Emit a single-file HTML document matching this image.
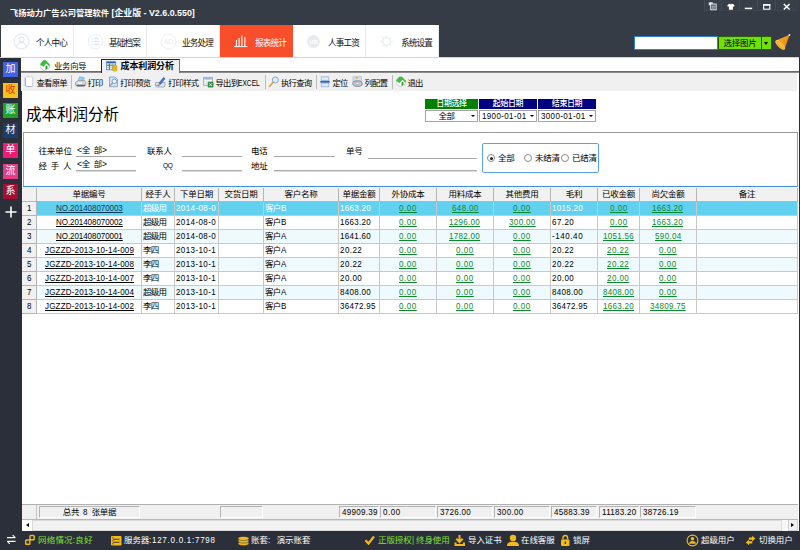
<!DOCTYPE html>
<html lang="zh-CN"><head><meta charset="utf-8"><title>飞扬动力广告公司管理软件</title>
<style>
*{box-sizing:border-box;margin:0;padding:0}
html,body{width:800px;height:550px;overflow:hidden;background:#fff}
body{position:relative;font-family:"Liberation Sans","Noto Sans CJK SC",sans-serif;font-size:9px;color:#000;line-height:1}
.a{position:absolute;white-space:nowrap}
.t{position:absolute;white-space:nowrap;line-height:12px;height:12px}
#titlebar{left:0;top:0;width:800px;height:58px;background:#363c46}
#title{left:10px;top:6.5px;color:#fff;font-weight:bold;font-size:8.250px;line-height:13px}
.wb{top:0;height:11px;width:18px;background:#393f49;border-left:1px solid #454b55;border-bottom:1px solid #3f454f}
#nav{left:1px;top:24px;width:438px;height:33px;background:#fff}
.nt{top:0;height:33px;width:73px;border-right:1px solid #e9ecee}
.nt .ic{position:absolute;left:13px;top:9px;width:15px;height:15px;border:1px solid #e2e6e8;border-radius:50%}
.nt .tx{position:absolute;left:35px;top:12.5px;font-size:8.6px;line-height:13px;color:#111;letter-spacing:-0.850px;font-weight:400}
.nt.on{background:#f94e2b;border-right:none}
.nt.on .tx{color:#fff}
#navline{left:0;top:57px;width:800px;height:1px;background:#c9d6e4}
#side{left:0;top:58px;width:22px;height:473px;background:#2a2f39}
.sb{left:3px;width:15px;height:15px;color:#fff;font-size:10px;line-height:14.5px;text-align:center}
#tabs{left:21px;top:58px;width:779px;height:15px;background:#fff}
#tabline{left:21px;top:71px;width:778px;height:2px;background:#8c8c8c;border-top:1px solid #6c6c6c}
#tabon{left:101px;top:59px;width:79px;height:14px;background:#f0f0f0;border:1px solid #222;border-right-color:#777;border-bottom:none}
#toolbar{left:21px;top:73px;width:776px;height:17.5px;background:#f0f0f0}
.sep{top:75px;width:1px;height:14px;background:#bcbcbc}
.tb{top:76.5px;font-size:8.3px;line-height:12px;letter-spacing:-0.7px}
#h1{left:26px;top:104.7px;font-size:15.5px;line-height:20px;color:#000}
.dh{top:99px;height:10px;color:#fff;font-size:8px;line-height:10px;text-align:center;letter-spacing:-0.4px;font-weight:500}
.dd{top:110px;height:12px;border:1px solid #a4a4a4;background:#fff;font-size:8.5px;line-height:10.5px;padding-left:1.5px}
.dd i{position:absolute;right:2.5px;top:4px;width:0;height:0;border-left:2.3px solid transparent;border-right:2.3px solid transparent;border-top:2.5px solid #000}
#panel{left:23px;top:132px;width:775px;height:55px;border:1px solid #9a9a9a;border-bottom:1px solid #3b8fe0;background:#fff}
.lb{font-size:8.5px;line-height:12px;letter-spacing:-0.2px;word-spacing:1.5px}
.ul{height:1px;background:#a6a6a6}
.ul2{height:2px;background:#dcdcdc;border-top:1px solid #acacac}
#rg{left:482px;top:143px;width:117px;height:30px;border:1px solid #5aa2f0;border-radius:2px}
.rd{width:8px;height:8px;border:1px solid #8a8a8a;border-radius:50%;background:#fff}
.rd.on::after{content:"";position:absolute;left:1.5px;top:1.5px;width:3px;height:3px;background:#222;border-radius:50%}
#grid{left:22px;top:187px;width:776px;height:318px;background:#fff}
.gh{top:188px;height:14px;background:#f1f1f1;border-right:1px solid #b5b5b5;border-bottom:1px solid #b5b5b5;font-size:8.5px;line-height:13.4px;text-align:center;letter-spacing:-0.2px}
.row{left:22px;width:776px;height:14px}
.c{position:absolute;top:0;height:14px;border-right:1px solid #c9c9c9;border-bottom:1px solid #c9c9c9;font-size:8.5px;line-height:13px;overflow:hidden;white-space:nowrap}
.n{display:inline-block;font-family:"Liberation Sans",sans-serif;font-size:9px;transform:scaleX(.89);transform-origin:0 50%;white-space:nowrap;text-align:left;vertical-align:top}
.c.l{padding-left:1px;text-align:left}
.c.m{text-align:center}
.c.cn{font-size:8.5px;letter-spacing:-0.75px;line-height:12px}
.c u{color:#0a8a2a}
.c.k u{color:#000}
.rn{background:#f1f1f1;border-color:#b5b5b5}
.sel .c{color:#fff}
.sel .c.rn{color:#000}
.sel .c.k u{color:#083a5a}
#foot{left:22px;top:504px;width:776px;height:15px;background:#f0f0f0;border-top:1px solid #b0b0b0}
.fc{top:506px;height:12px;border:1px solid #b4b4b4;border-right-color:#fff;border-bottom-color:#fff;font-size:8.5px;line-height:10px;padding-left:1.5px;background:#f0f0f0;overflow:hidden}
#hs{left:22px;top:519px;width:776px;height:12px;background:#f7f7f7;border-top:1px solid #b8b8b8}
#status{left:0;top:531px;width:800px;height:19px;background:#2a2f39}
.st{top:534px;font-size:8.5px;line-height:12px;color:#fff;letter-spacing:-0.1px}
.st .n,.fc .n{vertical-align:baseline}
.g{color:#84e03a}
</style></head><body>

<div class="a" id="titlebar"></div>
<div class="a" id="title">飞扬动力广告公司管理软件<span style="font-size:8.9px"> [企业版 - V2.6.0.550]</span></div>
<div class="a wb" style="left:704px;width:17px"></div>
<div class="a wb" style="left:721px;width:18px"></div>
<div class="a wb" style="left:739px;width:18px"></div>
<div class="a wb" style="left:757px;width:18px"></div>
<div class="a wb" style="left:775px;width:24px"></div>
<svg class="a" style="left:703px;top:0" width="97" height="13" viewBox="0 0 97 13">
<g fill="none" stroke="#fff" stroke-width="1.4">
<rect x="5.8" y="2.3" width="4" height="3" fill="#e8eaee" stroke="none"/><rect x="7.6" y="4" width="5.6" height="5.8" fill="#5a606a" stroke="#e4e6ea" stroke-width="0.9"/><path d="M8.8 6.3h3.2M8.8 8h3.2" stroke="#d0d3d8" stroke-width="0.7"/>
<path d="M25.3 4.3l1.7-0.5l0.9 0.8l0.9-0.8l1.7 0.5l1.2 1.6l-1.2 0.9l-0.6-0.4v3.4h-4v-3.4l-0.6 0.4l-1.2-0.9z" fill="#fff" stroke="none"/>
<path d="M41.8 8.4h7.4" stroke-width="1.5"/>
<rect x="60.6" y="5" width="6.2" height="4.2" stroke-width="1.1"/><path d="M60 4.8h7.4" stroke-width="1.5"/>
<path d="M80.8 4l5.8 5.5M86.6 4l-5.8 5.5" stroke-width="1.5"/>
</g></svg>
<div class="a" id="nav">
<div class="a nt" style="left:0px;width:73px">
<svg class="a" style="left:11.5px;top:9.0px" width="17" height="17" viewBox="0 0 17 17"><g fill="none" stroke="#dfe4e6" stroke-width="1"><circle cx="8.5" cy="8.5" r="7.5"/><circle cx="8.5" cy="6.5" r="2.6"/><path d="M3.6 13.6c0.6-3 2.6-4.2 4.9-4.2s4.3 1.2 4.9 4.2"/></g></svg>
<span class="tx">个人中心</span></div>
<div class="a nt" style="left:73px;width:73px">
<svg class="a" style="left:12.5px;top:9.0px" width="17" height="17" viewBox="0 0 17 17"><g fill="none" stroke="#e9edf0" stroke-width="1"><circle cx="8.5" cy="8.5" r="7.3"/><path d="M4.6 5.6h1.3M7.2 5.6h5M4.6 8.5h1.3M7.2 8.5h5M4.6 11.4h1.3M7.2 11.4h5" stroke="#dde6ec" stroke-width="1.5"/></g></svg>
<span class="tx">基础档案</span></div>
<div class="a nt" style="left:146px;width:73px">
<svg class="a" style="left:12.5px;top:9.0px" width="17" height="17" viewBox="0 0 17 17"><g fill="none" stroke="#eceff0" stroke-width="1"><circle cx="8.5" cy="8.5" r="7.5"/></g><text x="8.5" y="11" font-size="6.5" text-anchor="middle" fill="#e9ecee" font-family="Liberation Sans, sans-serif">AD</text></svg>
<span class="tx">业务处理</span></div>
<div class="a nt on" style="left:219px;width:73px">
<svg class="a" style="left:13px;top:8px" width="17" height="17" viewBox="0 0 17 17"><g fill="none" stroke="#fff" stroke-width="1"><path d="M1 14.6h13.4"/><path d="M3.5 14.5V8M6.1 14.5V6M8.9 14.5V3.6M11.9 14.5V5" stroke-width="1.1"/></g></svg>
<span class="tx">报表统计</span></div>
<div class="a nt" style="left:292px;width:73px">
<svg class="a" style="left:12.5px;top:10.0px" width="15" height="15" viewBox="0 0 15 15"><circle cx="7.5" cy="7.5" r="6.4" fill="#e8ecee"/><text x="7.5" y="9.6" font-size="5.8" font-weight="bold" text-anchor="middle" fill="#fff" font-family="Liberation Sans, sans-serif">HR</text></svg>
<span class="tx">人事工资</span></div>
<div class="a nt" style="left:365px;width:73px">
<svg class="a" style="left:12.0px;top:9.0px" width="17" height="17" viewBox="0 0 17 17"><g fill="none" stroke="#e9edef" stroke-width="1.3"><circle cx="8.5" cy="8.5" r="3.7"/><path d="M8.5 2.2v2M8.5 12.8v2M2.2 8.5h2M12.8 8.5h2M4 4l1.4 1.4M11.6 11.6l1.4 1.4M4 13l1.4-1.4M11.6 5.4l1.4-1.4"/></g></svg>
<span class="tx">系统设置</span></div>
</div>
<div class="a" style="left:0;top:24px;width:440px;height:1px;background:#363c46"></div>
<div class="a" id="navline"></div>
<div class="a" style="left:634px;top:36px;width:84px;height:14px;background:#fff;border:1px solid #2e7fd6"></div>
<div class="a" style="left:718px;top:36px;width:44px;height:14px;background:#70e000;border:1px solid #2c5a10;font-size:8.5px;line-height:12px;text-align:center;letter-spacing:-0.3px">选择图片</div>
<div class="a" style="left:762px;top:36px;width:10px;height:14px;background:#70e000;border:1px solid #2c5a10;border-left:none"><i class="a" style="left:2px;top:5px;border-left:2.5px solid transparent;border-right:2.5px solid transparent;border-top:3px solid #000"></i></div>
<svg class="a" style="left:774px;top:33px" width="18" height="18" viewBox="0 0 18 18"><defs><linearGradient id="hg" x1="0" y1="0" x2="1" y2="1"><stop offset="0" stop-color="#fbb52a"/><stop offset="1" stop-color="#e27a0a"/></linearGradient></defs><path d="M15.6 1.8L1.9 7.6c-0.5 2.5 4.5 8.5 8.6 8.6z" fill="url(#hg)"/><ellipse cx="6.2" cy="11.9" rx="6" ry="2.3" transform="rotate(45 6.2 11.9)" fill="#f8a818" stroke="#fcd070" stroke-width="0.7"/><ellipse cx="6.5" cy="11.6" rx="4" ry="1.3" transform="rotate(45 6.5 11.6)" fill="#f6b83a"/><circle cx="15.4" cy="2" r="0.9" fill="#f4f4f4"/></svg>
<div class="a" id="side"></div>
<div class="a sb" style="top:62px;background:#4062e4;color:#fff">加</div>
<div class="a sb" style="top:83px;background:#f7c01c;color:#e0301c">收</div>
<div class="a sb" style="top:103px;background:#22a326;color:#fff">账</div>
<div class="a sb" style="top:123px;background:#1d3d6a;color:#fff">材</div>
<div class="a sb" style="top:143px;background:#ee1c74;color:#fff">单</div>
<div class="a sb" style="top:164px;background:#e23c86;color:#fff">流</div>
<div class="a sb" style="top:184px;background:#a50f32;color:#fff">系</div>
<svg class="a" style="left:4.5px;top:206px" width="12" height="12" viewBox="0 0 12 12"><path d="M6 0.5v11M0.5 6h11" stroke="#fff" stroke-width="1.6"/></svg>
<div class="a" id="tabs"></div><div class="a" id="tabline"></div><div class="a" id="tabon"></div>
<svg class="a" style="left:40px;top:59.5px" width="11" height="12" viewBox="0 0 11 12"><path d="M0.8 5v3l3.2 2.6l5.3-2.4v-2.7l-3-2.5l-2.8 3.3z" fill="#fff" stroke="#b4b4b4" stroke-width="0.6"/><path d="M0.3 4.3l3-3.7h2.5l4.1 4.4l-0.7 0.8l-2.9-2.8l-2.8 3.3z" fill="#37c437" stroke="#1e8a1e" stroke-width="0.4"/><path d="M5.6 6l1.8-0.6v3.4l-1.8 0.8z" fill="#1d9a1d"/></svg>
<div class="t" style="left:54px;top:59.5px;font-size:8.3px;letter-spacing:-0.2px">业务向导</div>
<svg class="a" style="left:106px;top:60.5px" width="12" height="11" viewBox="0 0 12 11"><rect x="0.6" y="0.8" width="9" height="8" fill="#eaf2fc" stroke="#4a78c4" stroke-width="0.7"/><rect x="0.6" y="0.6" width="9" height="1.7" fill="#2f62c0"/><path d="M0.8 6.3h8.6" stroke="#8fc0ec" stroke-width="0.8"/><path d="M3.4 2.3v6.5M0.8 4.2h8.6" stroke="#1f8a2a" stroke-width="0.9"/><path d="M6.4 2.3v6.5" stroke="#7aa4dc" stroke-width="0.7"/><rect x="6.7" y="4.3" width="4.2" height="5.8" rx="1.2" fill="#f3c318" stroke="#b8860b" stroke-width="0.5"/><path d="M7 6.3h3.6M7 8h3.6" stroke="#c89a10" stroke-width="0.5"/></svg>
<div class="t" style="left:120.5px;top:59.5px;font-size:9px;font-weight:bold;letter-spacing:-0.1px">成本利润分析</div>
<div class="a" id="toolbar"></div>
<div class="t tb" style="left:36.5px">查看原单</div>
<div class="t tb" style="left:87.5px">打印</div>
<div class="t tb" style="left:120.0px">打印预览</div>
<div class="t tb" style="left:168.0px">打印样式</div>
<div class="t tb" style="left:215.5px">导出到<span style="display:inline-block;width:21.5px;font-size:8.5px;letter-spacing:0;transform:scaleX(.78);transform-origin:0 50%">EXCEL</span></div>
<div class="t tb" style="left:281.0px">执行查询</div>
<div class="t tb" style="left:332.5px">定位</div>
<div class="t tb" style="left:364.5px">列配置</div>
<div class="t tb" style="left:407.5px">退出</div>
<div class="a sep" style="left:71px"></div>
<div class="a sep" style="left:265px"></div>
<div class="a sep" style="left:316px"></div>
<div class="a sep" style="left:392px"></div>
<svg class="a" style="left:21px;top:73px" width="400" height="18" viewBox="0 0 400 18">
<g><rect x="4.3" y="3.8" width="7.4" height="9.7" rx="0.8" fill="#fff" stroke="#c3cbe6" stroke-width="0.9"/><path d="M4.3 5v8" stroke="#8fa3da" stroke-width="0.9"/><path d="M5 13.5h6.5" stroke="#a9b4dc" stroke-width="0.9"/></g>
<g><path d="M58.5 3.7l5 1l-1.7 4h-5z" fill="#8fd0f4" stroke="#5aa6d6" stroke-width="0.5"/><path d="M54.5 9.2l3-1.7h6l1.3 1.7v2.6l-1.5 1.7h-7.3l-1.5-1.7z" fill="#d4d9df" stroke="#858e98" stroke-width="0.7"/><path d="M55.5 12.3h8.5" stroke="#4a5058" stroke-width="1.1"/><path d="M56.5 10.2h4.5" stroke="#fff" stroke-width="1"/></g>
<g><path d="M88.5 4h5.5l2.5 2.3v7.4h-8z" fill="#d5e4fa" stroke="#6d93d6" stroke-width="0.8"/><circle cx="93.3" cy="8.3" r="2.3" fill="#eef5ff" stroke="#5d86c8" stroke-width="0.8"/><path d="M91.6 10l-2.6 2.8" stroke="#d58f3c" stroke-width="1.2"/></g>
<g><path d="M134.5 9.5h9.5v3.5l-1 1h-7.5l-1-1z" fill="#dfe7f3" stroke="#8093b8" stroke-width="0.7"/><path d="M137.8 10.3l4.7-6l1.7 1.3l-4.7 6z" fill="#3f74c8" stroke="#2a4f94" stroke-width="0.4"/><path d="M137.8 10.3l1.7 1.3l-2.3 0.8z" fill="#f0a030"/><path d="M135.5 12.5c1-1.2 2 0.8 3.2-0.3" stroke="#1c2c58" stroke-width="0.6" fill="none"/></g>
<g><rect x="182.7" y="4.3" width="8.6" height="8" fill="#fff" stroke="#8a99b4" stroke-width="0.8"/><rect x="183.2" y="4.8" width="7.6" height="1.8" fill="#9fb4d6"/><path d="M183 8.5h8M183 10.5h4M185.5 6.8v5.5" stroke="#c3cede" stroke-width="0.5"/><rect x="187" y="9" width="5.2" height="5.2" rx="0.6" fill="#2f9a45" stroke="#1f6e30" stroke-width="0.4"/><path d="M188.3 10.3l2.6 2.7M190.9 10.3l-2.6 2.7" stroke="#fff" stroke-width="0.8"/></g>
<g><circle cx="254.3" cy="7" r="3" fill="#d9ecfc" stroke="#7aa0cc" stroke-width="0.9"/><path d="M252.2 9.3l-3.6 4" stroke="#e39a3a" stroke-width="1.7" stroke-linecap="round"/></g>
<g><rect x="300.2" y="3.8" width="7.6" height="3.6" fill="#dbe9f8" stroke="#8fb0da" stroke-width="0.7"/><rect x="300.2" y="10.2" width="7.6" height="3.6" fill="#dbe9f8" stroke="#8fb0da" stroke-width="0.7"/><rect x="299.3" y="7.9" width="9.4" height="1.8" fill="#2f62b8"/></g>
<g><rect x="332" y="3.8" width="8.5" height="5" fill="#cfe3f8" stroke="#8fb0da" stroke-width="0.6"/><circle cx="335.8" cy="4.8" r="1.3" fill="#f3b63a"/><ellipse cx="336.5" cy="10.6" rx="4.8" ry="2.8" fill="#c6ccd2" stroke="#6b7580" stroke-width="0.8"/><ellipse cx="336.5" cy="10.3" rx="2.3" ry="1.1" fill="#eef0f2" stroke="#7f8892" stroke-width="0.5"/></g>
<g transform="translate(375 3.3)"><path d="M0.8 5v3l3.2 2.6l5.3-2.4v-2.7l-3-2.5l-2.8 3.3z" fill="#fff" stroke="#b4b4b4" stroke-width="0.6"/><path d="M0.3 4.3l3-3.7h2.5l4.1 4.4l-0.7 0.8l-2.9-2.8l-2.8 3.3z" fill="#37c437" stroke="#1e8a1e" stroke-width="0.4"/><path d="M5.6 6l1.8-0.6v3.4l-1.8 0.8z" fill="#1d9a1d"/></g>
</svg>
<div class="a" id="h1">成本利润分析</div>
<div class="a dh" style="left:425px;width:53px;background:#008000">日期选择</div>
<div class="a dh" style="left:479px;width:58px;background:#000080">起始日期</div>
<div class="a dh" style="left:538px;width:58px;background:#000080">结束日期</div>
<div class="a dd" style="left:425px;width:53px;padding-left:12.5px;letter-spacing:-0.5px">全部<i></i></div>
<div class="a dd" style="left:479px;width:58px"><span class="n" style="width:44.5px;letter-spacing:0.4px">1900-01-01</span><i></i></div>
<div class="a dd" style="left:538px;width:58px"><span class="n" style="width:44.5px;letter-spacing:0.4px">3000-01-01</span><i></i></div>
<div class="a" id="panel"></div>
<div class="t lb" style="left:38.5px;top:145px">往来单位</div>
<div class="t lb" style="left:38.5px;top:160px;letter-spacing:3.7px">经手人</div>
<div class="t lb" style="left:77px;top:144px">&lt;全 部&gt;</div>
<div class="t lb" style="left:77px;top:158px">&lt;全 部&gt;</div>
<div class="a ul" style="left:76px;top:156px;width:60px"></div>
<div class="a ul2" style="left:76px;top:170px;width:60px"></div>
<div class="t lb" style="left:147px;top:145px">联系人</div>
<div class="t lb" style="left:163px;top:160px;font-size:6.5px">QQ</div>
<div class="a ul" style="left:182px;top:156px;width:60px"></div>
<div class="a ul2" style="left:182px;top:170px;width:60px"></div>
<div class="t lb" style="left:251px;top:145px">电话</div>
<div class="t lb" style="left:251px;top:160px">地址</div>
<div class="a ul" style="left:274px;top:156px;width:61px"></div>
<div class="a ul2" style="left:274px;top:170px;width:203px"></div>
<div class="t lb" style="left:346px;top:145px">单号</div>
<div class="a ul" style="left:368px;top:158px;width:109px"></div>
<div class="a" id="rg"></div>
<div class="a rd on" style="left:487px;top:154px"></div><div class="t lb" style="left:498px;top:152px">全部</div>
<div class="a rd" style="left:524px;top:154px"></div><div class="t lb" style="left:535px;top:152px">未结清</div>
<div class="a rd" style="left:561px;top:154px"></div><div class="t lb" style="left:572px;top:152px">已结清</div>
<div class="a" id="grid"></div>
<div class="a gh" style="left:22px;width:15px"></div>
<div class="a gh" style="left:37px;width:105px">单据编号</div>
<div class="a gh" style="left:142px;width:33px">经手人</div>
<div class="a gh" style="left:175px;width:44px">下单日期</div>
<div class="a gh" style="left:219px;width:45px">交货日期</div>
<div class="a gh" style="left:264px;width:75px">客户名称</div>
<div class="a gh" style="left:339px;width:41px">单据金额</div>
<div class="a gh" style="left:380px;width:57px">外协成本</div>
<div class="a gh" style="left:437px;width:57px">用料成本</div>
<div class="a gh" style="left:494px;width:57px">其他费用</div>
<div class="a gh" style="left:551px;width:47px">毛利</div>
<div class="a gh" style="left:598px;width:42px">已收金额</div>
<div class="a gh" style="left:640px;width:57px">尚欠金额</div>
<div class="a gh" style="left:697px;width:101px">备注</div>
<div class="a row sel" style="top:202px;background:#62d1ef">
<div class="c m rn" style="left:0px;width:15px"><span class="n" style="width:4.45px;letter-spacing:-0.0px">1</span></div>
<div class="c m k" style="left:15px;width:105px"><span class="n" style="width:66.75px;letter-spacing:-0.07px"><u>NO.201408070003</u></span></div>
<div class="c l cn" style="left:120px;width:33px">超级用</div>
<div class="c l" style="left:153px;width:44px"><span class="n" style="width:40.05px;letter-spacing:0.44px">2014-08-0</span></div>
<div class="c l" style="left:197px;width:45px"></div>
<div class="c l cn" style="left:242px;width:75px">客户<span class="n" style="width:4.45px;letter-spacing:-1.0px">B</span></div>
<div class="c l" style="left:317px;width:41px"><span class="n" style="width:31.15px;letter-spacing:0.35px">1663.20</span></div>
<div class="c m" style="left:358px;width:57px"><span class="n" style="width:17.8px;letter-spacing:0.62px"><u>0.00</u></span></div>
<div class="c m" style="left:415px;width:57px"><span class="n" style="width:26.7px;letter-spacing:0.41px"><u>648.00</u></span></div>
<div class="c m" style="left:472px;width:57px"><span class="n" style="width:17.8px;letter-spacing:0.62px"><u>0.00</u></span></div>
<div class="c l" style="left:529px;width:47px"><span class="n" style="width:31.15px;letter-spacing:0.35px">1015.20</span></div>
<div class="c m" style="left:576px;width:42px"><span class="n" style="width:17.8px;letter-spacing:0.62px"><u>0.00</u></span></div>
<div class="c m" style="left:618px;width:57px"><span class="n" style="width:31.15px;letter-spacing:0.35px"><u>1663.20</u></span></div>
<div class="c l" style="left:675px;width:101px"></div>
</div>
<div class="a row" style="top:216px;background:#fff">
<div class="c m rn" style="left:0px;width:15px"><span class="n" style="width:4.45px;letter-spacing:-0.0px">2</span></div>
<div class="c m k" style="left:15px;width:105px"><span class="n" style="width:66.75px;letter-spacing:-0.07px"><u>NO.201408070002</u></span></div>
<div class="c l cn" style="left:120px;width:33px">超级用</div>
<div class="c l" style="left:153px;width:44px"><span class="n" style="width:40.05px;letter-spacing:0.44px">2014-08-0</span></div>
<div class="c l" style="left:197px;width:45px"></div>
<div class="c l cn" style="left:242px;width:75px">客户<span class="n" style="width:4.45px;letter-spacing:-1.0px">B</span></div>
<div class="c l" style="left:317px;width:41px"><span class="n" style="width:31.15px;letter-spacing:0.35px">1663.20</span></div>
<div class="c m" style="left:358px;width:57px"><span class="n" style="width:17.8px;letter-spacing:0.62px"><u>0.00</u></span></div>
<div class="c m" style="left:415px;width:57px"><span class="n" style="width:31.15px;letter-spacing:0.35px"><u>1296.00</u></span></div>
<div class="c m" style="left:472px;width:57px"><span class="n" style="width:26.7px;letter-spacing:0.41px"><u>300.00</u></span></div>
<div class="c l" style="left:529px;width:47px"><span class="n" style="width:22.25px;letter-spacing:0.5px">67.20</span></div>
<div class="c m" style="left:576px;width:42px"><span class="n" style="width:17.8px;letter-spacing:0.62px"><u>0.00</u></span></div>
<div class="c m" style="left:618px;width:57px"><span class="n" style="width:31.15px;letter-spacing:0.35px"><u>1663.20</u></span></div>
<div class="c l" style="left:675px;width:101px"></div>
</div>
<div class="a row" style="top:230px;background:#eefafd">
<div class="c m rn" style="left:0px;width:15px"><span class="n" style="width:4.45px;letter-spacing:-0.0px">3</span></div>
<div class="c m k" style="left:15px;width:105px"><span class="n" style="width:66.75px;letter-spacing:-0.07px"><u>NO.201408070001</u></span></div>
<div class="c l cn" style="left:120px;width:33px">超级用</div>
<div class="c l" style="left:153px;width:44px"><span class="n" style="width:40.05px;letter-spacing:0.44px">2014-08-0</span></div>
<div class="c l" style="left:197px;width:45px"></div>
<div class="c l cn" style="left:242px;width:75px">客户<span class="n" style="width:4.45px;letter-spacing:-1.0px">A</span></div>
<div class="c l" style="left:317px;width:41px"><span class="n" style="width:31.15px;letter-spacing:0.35px">1641.60</span></div>
<div class="c m" style="left:358px;width:57px"><span class="n" style="width:17.8px;letter-spacing:0.62px"><u>0.00</u></span></div>
<div class="c m" style="left:415px;width:57px"><span class="n" style="width:31.15px;letter-spacing:0.35px"><u>1782.00</u></span></div>
<div class="c m" style="left:472px;width:57px"><span class="n" style="width:17.8px;letter-spacing:0.62px"><u>0.00</u></span></div>
<div class="c l" style="left:529px;width:47px"><span class="n" style="width:31.15px;letter-spacing:0.64px">-140.40</span></div>
<div class="c m" style="left:576px;width:42px"><span class="n" style="width:31.15px;letter-spacing:0.35px"><u>1051.56</u></span></div>
<div class="c m" style="left:618px;width:57px"><span class="n" style="width:26.7px;letter-spacing:0.41px"><u>590.04</u></span></div>
<div class="c l" style="left:675px;width:101px"></div>
</div>
<div class="a row" style="top:244px;background:#fff">
<div class="c m rn" style="left:0px;width:15px"><span class="n" style="width:4.45px;letter-spacing:-0.0px">4</span></div>
<div class="c m k" style="left:15px;width:105px"><span class="n" style="width:89.0px;letter-spacing:0.2px"><u>JGZZD-2013-10-14-009</u></span></div>
<div class="c l cn" style="left:120px;width:33px">李四</div>
<div class="c l" style="left:153px;width:44px"><span class="n" style="width:40.05px;letter-spacing:0.44px">2013-10-1</span></div>
<div class="c l" style="left:197px;width:45px"></div>
<div class="c l cn" style="left:242px;width:75px">客户<span class="n" style="width:4.45px;letter-spacing:-1.0px">A</span></div>
<div class="c l" style="left:317px;width:41px"><span class="n" style="width:22.25px;letter-spacing:0.5px">20.22</span></div>
<div class="c m" style="left:358px;width:57px"><span class="n" style="width:17.8px;letter-spacing:0.62px"><u>0.00</u></span></div>
<div class="c m" style="left:415px;width:57px"><span class="n" style="width:17.8px;letter-spacing:0.62px"><u>0.00</u></span></div>
<div class="c m" style="left:472px;width:57px"><span class="n" style="width:17.8px;letter-spacing:0.62px"><u>0.00</u></span></div>
<div class="c l" style="left:529px;width:47px"><span class="n" style="width:22.25px;letter-spacing:0.5px">20.22</span></div>
<div class="c m" style="left:576px;width:42px"><span class="n" style="width:22.25px;letter-spacing:0.5px"><u>20.22</u></span></div>
<div class="c m" style="left:618px;width:57px"><span class="n" style="width:17.8px;letter-spacing:0.62px"><u>0.00</u></span></div>
<div class="c l" style="left:675px;width:101px"></div>
</div>
<div class="a row" style="top:258px;background:#eefafd">
<div class="c m rn" style="left:0px;width:15px"><span class="n" style="width:4.45px;letter-spacing:-0.0px">5</span></div>
<div class="c m k" style="left:15px;width:105px"><span class="n" style="width:89.0px;letter-spacing:0.2px"><u>JGZZD-2013-10-14-008</u></span></div>
<div class="c l cn" style="left:120px;width:33px">李四</div>
<div class="c l" style="left:153px;width:44px"><span class="n" style="width:40.05px;letter-spacing:0.44px">2013-10-1</span></div>
<div class="c l" style="left:197px;width:45px"></div>
<div class="c l cn" style="left:242px;width:75px">客户<span class="n" style="width:4.45px;letter-spacing:-1.0px">A</span></div>
<div class="c l" style="left:317px;width:41px"><span class="n" style="width:22.25px;letter-spacing:0.5px">20.22</span></div>
<div class="c m" style="left:358px;width:57px"><span class="n" style="width:17.8px;letter-spacing:0.62px"><u>0.00</u></span></div>
<div class="c m" style="left:415px;width:57px"><span class="n" style="width:17.8px;letter-spacing:0.62px"><u>0.00</u></span></div>
<div class="c m" style="left:472px;width:57px"><span class="n" style="width:17.8px;letter-spacing:0.62px"><u>0.00</u></span></div>
<div class="c l" style="left:529px;width:47px"><span class="n" style="width:22.25px;letter-spacing:0.5px">20.22</span></div>
<div class="c m" style="left:576px;width:42px"><span class="n" style="width:22.25px;letter-spacing:0.5px"><u>20.22</u></span></div>
<div class="c m" style="left:618px;width:57px"><span class="n" style="width:17.8px;letter-spacing:0.62px"><u>0.00</u></span></div>
<div class="c l" style="left:675px;width:101px"></div>
</div>
<div class="a row" style="top:272px;background:#fff">
<div class="c m rn" style="left:0px;width:15px"><span class="n" style="width:4.45px;letter-spacing:-0.0px">6</span></div>
<div class="c m k" style="left:15px;width:105px"><span class="n" style="width:89.0px;letter-spacing:0.2px"><u>JGZZD-2013-10-14-007</u></span></div>
<div class="c l cn" style="left:120px;width:33px">李四</div>
<div class="c l" style="left:153px;width:44px"><span class="n" style="width:40.05px;letter-spacing:0.44px">2013-10-1</span></div>
<div class="c l" style="left:197px;width:45px"></div>
<div class="c l cn" style="left:242px;width:75px">客户<span class="n" style="width:4.45px;letter-spacing:-1.0px">A</span></div>
<div class="c l" style="left:317px;width:41px"><span class="n" style="width:22.25px;letter-spacing:0.5px">20.00</span></div>
<div class="c m" style="left:358px;width:57px"><span class="n" style="width:17.8px;letter-spacing:0.62px"><u>0.00</u></span></div>
<div class="c m" style="left:415px;width:57px"><span class="n" style="width:17.8px;letter-spacing:0.62px"><u>0.00</u></span></div>
<div class="c m" style="left:472px;width:57px"><span class="n" style="width:17.8px;letter-spacing:0.62px"><u>0.00</u></span></div>
<div class="c l" style="left:529px;width:47px"><span class="n" style="width:22.25px;letter-spacing:0.5px">20.00</span></div>
<div class="c m" style="left:576px;width:42px"><span class="n" style="width:22.25px;letter-spacing:0.5px"><u>20.00</u></span></div>
<div class="c m" style="left:618px;width:57px"><span class="n" style="width:17.8px;letter-spacing:0.62px"><u>0.00</u></span></div>
<div class="c l" style="left:675px;width:101px"></div>
</div>
<div class="a row" style="top:286px;background:#eefafd">
<div class="c m rn" style="left:0px;width:15px"><span class="n" style="width:4.45px;letter-spacing:-0.0px">7</span></div>
<div class="c m k" style="left:15px;width:105px"><span class="n" style="width:89.0px;letter-spacing:0.2px"><u>JGZZD-2013-10-14-004</u></span></div>
<div class="c l cn" style="left:120px;width:33px">超级用</div>
<div class="c l" style="left:153px;width:44px"><span class="n" style="width:40.05px;letter-spacing:0.44px">2013-10-1</span></div>
<div class="c l" style="left:197px;width:45px"></div>
<div class="c l cn" style="left:242px;width:75px">客户<span class="n" style="width:4.45px;letter-spacing:-1.0px">A</span></div>
<div class="c l" style="left:317px;width:41px"><span class="n" style="width:31.15px;letter-spacing:0.35px">8408.00</span></div>
<div class="c m" style="left:358px;width:57px"><span class="n" style="width:17.8px;letter-spacing:0.62px"><u>0.00</u></span></div>
<div class="c m" style="left:415px;width:57px"><span class="n" style="width:17.8px;letter-spacing:0.62px"><u>0.00</u></span></div>
<div class="c m" style="left:472px;width:57px"><span class="n" style="width:17.8px;letter-spacing:0.62px"><u>0.00</u></span></div>
<div class="c l" style="left:529px;width:47px"><span class="n" style="width:31.15px;letter-spacing:0.35px">8408.00</span></div>
<div class="c m" style="left:576px;width:42px"><span class="n" style="width:31.15px;letter-spacing:0.35px"><u>8408.00</u></span></div>
<div class="c m" style="left:618px;width:57px"><span class="n" style="width:17.8px;letter-spacing:0.62px"><u>0.00</u></span></div>
<div class="c l" style="left:675px;width:101px"></div>
</div>
<div class="a row" style="top:300px;background:#fff">
<div class="c m rn" style="left:0px;width:15px"><span class="n" style="width:4.45px;letter-spacing:-0.0px">8</span></div>
<div class="c m k" style="left:15px;width:105px"><span class="n" style="width:89.0px;letter-spacing:0.2px"><u>JGZZD-2013-10-14-002</u></span></div>
<div class="c l cn" style="left:120px;width:33px">李四</div>
<div class="c l" style="left:153px;width:44px"><span class="n" style="width:40.05px;letter-spacing:0.44px">2013-10-1</span></div>
<div class="c l" style="left:197px;width:45px"></div>
<div class="c l cn" style="left:242px;width:75px">客户<span class="n" style="width:4.45px;letter-spacing:-1.0px">B</span></div>
<div class="c l" style="left:317px;width:41px"><span class="n" style="width:35.6px;letter-spacing:0.31px">36472.95</span></div>
<div class="c m" style="left:358px;width:57px"><span class="n" style="width:17.8px;letter-spacing:0.62px"><u>0.00</u></span></div>
<div class="c m" style="left:415px;width:57px"><span class="n" style="width:17.8px;letter-spacing:0.62px"><u>0.00</u></span></div>
<div class="c m" style="left:472px;width:57px"><span class="n" style="width:17.8px;letter-spacing:0.62px"><u>0.00</u></span></div>
<div class="c l" style="left:529px;width:47px"><span class="n" style="width:35.6px;letter-spacing:0.31px">36472.95</span></div>
<div class="c m" style="left:576px;width:42px"><span class="n" style="width:31.15px;letter-spacing:0.35px"><u>1663.20</u></span></div>
<div class="c m" style="left:618px;width:57px"><span class="n" style="width:35.6px;letter-spacing:0.31px"><u>34809.75</u></span></div>
<div class="c l" style="left:675px;width:101px"></div>
</div>
<div class="a" id="foot"></div>
<div class="a fc" style="left:39px;width:101px;text-align:center;font-size:8.5px;padding-left:0;letter-spacing:-0.3px;word-spacing:2px">总共 <span class="n" style="width:4.45px;letter-spacing:-0.0px">8</span> 张单据</div>
<div class="a fc" style="left:220px;width:43px;"></div>
<div class="a fc" style="left:339px;width:40px;"><span class="n" style="width:35.6px;letter-spacing:0.31px">49909.39</span></div>
<div class="a fc" style="left:380px;width:56px;"><span class="n" style="width:17.8px;letter-spacing:0.62px">0.00</span></div>
<div class="a fc" style="left:437px;width:56px;"><span class="n" style="width:31.15px;letter-spacing:0.35px">3726.00</span></div>
<div class="a fc" style="left:494px;width:56px;"><span class="n" style="width:26.7px;letter-spacing:0.41px">300.00</span></div>
<div class="a fc" style="left:551px;width:46px;"><span class="n" style="width:35.6px;letter-spacing:0.31px">45883.39</span></div>
<div class="a fc" style="left:599px;width:40px;"><span class="n" style="width:35.6px;letter-spacing:0.31px">11183.20</span></div>
<div class="a fc" style="left:640px;width:56px;"><span class="n" style="width:35.6px;letter-spacing:0.31px">38726.19</span></div>
<div class="a" style="left:36px;top:505px;width:1px;height:14px;background:#c4c4c4"></div>
<div class="a" id="hs"></div>
<div class="a" style="left:22px;top:520px;width:10px;height:11px;background:#fff"></div><div class="a" style="left:25.5px;top:522.5px;border-top:2.5px solid transparent;border-bottom:2.5px solid transparent;border-right:3.5px solid #000"></div>
<div class="a" style="left:32px;top:520px;width:750px;height:11px;background:#f2f2f2;border:1px solid #dadada"></div>
<div class="a" style="left:788px;top:520px;width:10px;height:11px;background:#f0f0f0;border:1px solid #d4d4d4;border-top:none"></div><div class="a" style="left:790.5px;top:522.5px;border-top:2.5px solid transparent;border-bottom:2.5px solid transparent;border-left:3px solid #000"></div>
<div class="a" id="status"></div>
<div class="a" style="left:799px;top:57px;width:1px;height:474px;background:#2b3038"></div>
<div class="t st g" style="left:38px;letter-spacing:0.2px">网络情况:良好</div>
<div class="t st " style="left:124px;">服务器<span class="n" style="width:66.75px;letter-spacing:0.83px">:127.0.0.1:7798</span></div>
<div class="t st " style="left:251px;">账套<span class="n" style="width:8.9px;letter-spacing:2.5px">: </span>演示账套</div>
<div class="t st g" style="left:378px;">正版授权<span class="n" style="width:4.45px;letter-spacing:2.66px">|</span>终身使用</div>
<div class="t st " style="left:468px;">导入证书</div>
<div class="t st " style="left:521px;">在线客服</div>
<div class="t st " style="left:573px;">锁屏</div>
<div class="t st " style="left:701px;">超级用户</div>
<div class="t st " style="left:759px;">切换用户</div>
<svg class="a" style="left:0;top:529px" width="800" height="21" viewBox="0 0 800 21">
<g fill="none" stroke="#fff" stroke-width="1.2"><path d="M7 8.7h8.5M12.7 6.2l2.5 2.5M15.5 12.3H7M9.8 14.8L7.3 12.3"/></g>
<g fill="none" stroke="#f2b91a" stroke-width="1.4"><rect x="30" y="6.5" width="4.2" height="4.2" rx="0.8"/><rect x="25.7" y="11" width="4.2" height="4.2" rx="0.8"/><path d="M29.5 11.5l1.2-1.2"/></g>
<g fill="#f2b91a"><rect x="111" y="7" width="10.5" height="9.5" rx="0.8"/></g>
<g fill="#2a2f39"><rect x="113" y="9.8" width="6.5" height="0.9"/><rect x="113" y="12.8" width="6.5" height="0.9"/><rect x="112.3" y="8.3" width="1" height="1"/><rect x="112.3" y="11.3" width="1" height="1"/><rect x="112.3" y="14.3" width="1" height="1"/></g>
<g fill="#f2b91a" stroke="#2a2f39" stroke-width="0.5"><ellipse cx="243.5" cy="14.5" rx="5.5" ry="2.1"/><ellipse cx="243.5" cy="12" rx="5.5" ry="2.1"/><ellipse cx="243.5" cy="9.5" rx="5.5" ry="2.1"/></g>
<path d="M365.5 11.2l3 3.3l5.5-7" fill="none" stroke="#f2b91a" stroke-width="2.2"/>
<g fill="none" stroke="#f2b91a" stroke-width="2"><path d="M459.5 6v6.5M456.3 9.8l3.2 3.2l3.2-3.2M455.5 13.5v2.5h8.5v-2.5"/></g>
<g fill="#f2b91a"><circle cx="513" cy="9" r="3.2"/><path d="M507 17c0-3.5 2.5-4.3 6-4.3s6 0.8 6 4.3z"/></g>
<g><rect x="561" y="10.5" width="8.5" height="6.5" rx="1" fill="#f2b91a"/><path d="M563 10.5V8.8a2.3 2.3 0 0 1 4.6 0v1.7" fill="none" stroke="#f2b91a" stroke-width="1.4"/><rect x="564.7" y="12.5" width="1.2" height="2.5" fill="#2a2f39"/></g>
<g fill="none" stroke="#f2b91a" stroke-width="1.1"><circle cx="692.5" cy="11.5" r="5.4"/></g><g fill="#f2b91a"><circle cx="692.5" cy="9.8" r="1.8"/><path d="M689 14.8c0.3-2 1.7-2.7 3.5-2.7s3.2 0.7 3.5 2.7z"/></g>
<g fill="#f2b91a"><path d="M745.8 13.4l3.3-2.9v1.8h3.2v2.2h-3.2v1.8z"/><path d="M755.4 9.6l-3.3-2.9v1.8h-3.2v2.2h3.2v1.8z"/></g>
</svg>
</body></html>
